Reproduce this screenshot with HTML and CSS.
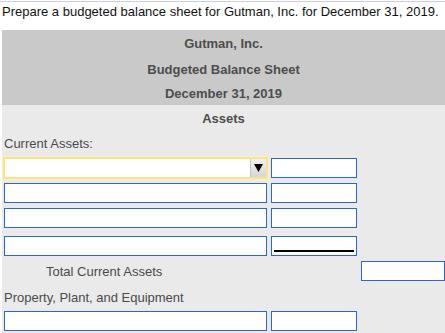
FILE: index.html
```html
<!DOCTYPE html>
<html>
<head>
<meta charset="utf-8">
<link rel="stylesheet" href="styles.css">
</head>
<body>
<div class="page">
  <p class="prompt">Prepare a budgeted balance sheet for Gutman, Inc. for December 31, 2019.</p>
  <div class="sheet">
    <div class="head">
      <div class="head-row h1">Gutman, Inc.</div>
      <div class="head-row h2">Budgeted Balance Sheet</div>
      <div class="head-row h3">December 31, 2019</div>
    </div>
    <div class="body">
      <div class="section-title">Assets</div>
      <div class="label">Current Assets:</div>
      <div class="row r1">
        <div class="select">
          <span class="select-btn"><svg width="9" height="8" viewBox="0 0 9 8"><path d="M0 0H9L4.5 8Z" fill="#000"/></svg></span>
        </div>
        <input class="amt" type="text">
      </div>
      <div class="row r2">
        <input class="desc" type="text">
        <input class="amt" type="text">
      </div>
      <div class="row r3">
        <input class="desc" type="text">
        <input class="amt" type="text">
      </div>
      <div class="row r4">
        <input class="desc" type="text">
        <input class="amt underline" type="text">
      </div>
      <div class="row total-row">
        <span class="total-label">Total Current Assets</span>
        <input class="total" type="text">
      </div>
      <div class="label label-ppe">Property, Plant, and Equipment</div>
      <div class="row r6">
        <input class="desc" type="text">
        <input class="amt" type="text">
      </div>
    </div>
  </div>
</div>
</body>
</html>
```

FILE: styles.css
```css
html, body {
  margin: 0;
  padding: 0;
  background: #fff;
}
body {
  font-family: "Liberation Sans", Arial, sans-serif;
  font-size: 13px;
  color: #4a4a4a;
  overflow: hidden;
}
.page {
  margin-top: 1px;
  border-top: 1px solid #c9cee2;
}
.prompt {
  margin: 0;
  padding-left: 2px;
  height: 20px;
  line-height: 20px;
  color: #111;
  margin-bottom: 8px;
  white-space: nowrap;
}
.sheet {
  margin-left: 2px;
}
.head {
  background: #c9c9c9;
  height: 75px;
  font-weight: bold;
  color: #4d4d4d;
  text-align: center;
}
.head-row.h1 { height: 27px; line-height: 27px; }
.head-row.h2 { height: 25px; line-height: 25px; }
.head-row.h3 { height: 23px; line-height: 23px; }
.body {
  background: #eaeaea;
  height: 240px;
}
.section-title {
  height: 28px;
  line-height: 28px;
  text-align: center;
  font-weight: bold;
  color: #4d4d4d;
}
.label {
  height: 22px;
  line-height: 22px;
  padding-left: 2px;
  color: #4a4a4a;
}
.row {
  display: flex;
  align-items: center;
  gap: 4px;
  padding-left: 2px;
  height: 20px;
}
.r1 { margin-top: 3px; }
.r2, .r3 { margin-top: 5px; }
.r4 { margin-top: 8px; }
.total-row { margin-top: 5px; gap: 0; }
input {
  box-sizing: border-box;
  height: 20px;
  margin: 0;
  padding: 0 3px;
  border: 1px solid #2c66d6;
  background: #fff;
  border-radius: 0;
  font: inherit;
  outline: none;
}
.desc { width: 263px; }
.amt { width: 86px; }
.underline {
  background: #fff linear-gradient(#000, #000) no-repeat;
  background-size: 80px 2px;
  background-position: 2px 13px;
}
.select {
  box-sizing: border-box;
  width: 265px;
  height: 22px;
  margin-left: -1px;
  border: 2px solid #fbe38e;
  box-shadow: 0 0 1px 1px #fdf0c4;
  background: #fff;
  display: flex;
  justify-content: flex-end;
  align-items: center;
}
.select + .amt { margin-left: -1px; }
.select-btn {
  box-sizing: border-box;
  width: 16px;
  height: 18px;
  border-left: 1px solid #c8c8c8;
  background: linear-gradient(#f2f2f2, #d6d6d6);
  display: flex;
  align-items: center;
  justify-content: center;
}
.total-label {
  width: 357px;
  padding-left: 42px;
  box-sizing: border-box;
  color: #4a4a4a;
  flex: none;
}
.total {
  width: 84px;
  flex: none;
}
.label-ppe {
  height: 27px;
  line-height: 27px;
  padding-top: 3px;
}
```
